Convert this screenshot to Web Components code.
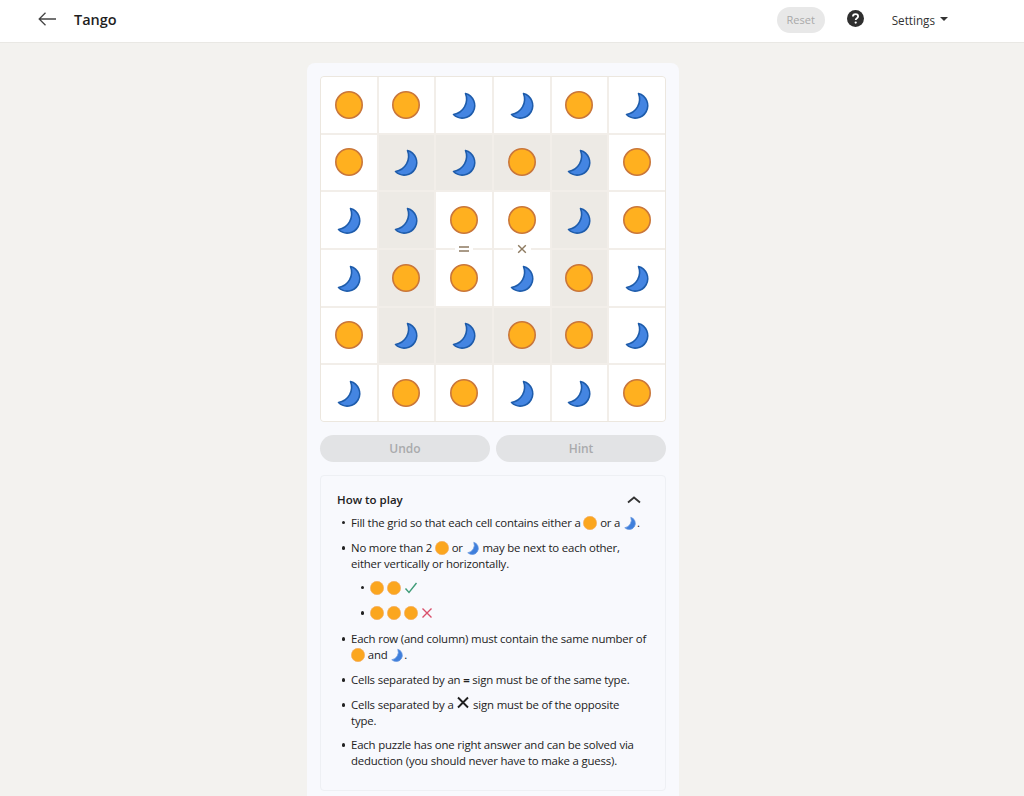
<!DOCTYPE html>
<html><head><meta charset="utf-8"><title>Tango</title>
<style>
html,body{margin:0;padding:0;background:#f3f2ef;font-family:"Open Sans","Noto Sans",sans-serif;color:#1f1f1f;}
body{height:796px;overflow:hidden;}
</style></head><body>
<tg-app></tg-app>
<script>
const SUN=(s,sw,fill,stroke)=>`<svg width="${s}" height="${s}" viewBox="0 0 28 28"><circle cx="14" cy="14" r="${14-sw/2}" fill="${fill}" stroke="${stroke}" stroke-width="${sw}"/></svg>`;
const MOON=(s,sw,fill,stroke)=>`<svg width="${s}" height="${s}" viewBox="0 0 28 28" style="overflow:visible"><path transform="translate(1 0)" d="M14.5 2.5A12.5 12.5 0 1 1 2.5 23.5A15.5 15.5 0 0 0 14.5 2.5Z" fill="${fill}" stroke="${stroke}" stroke-width="${sw}" stroke-linejoin="round"/></svg>`;
function def(name,css,render){
  customElements.define(name,class extends HTMLElement{
    constructor(){super();this.attachShadow({mode:'open'});}
    connectedCallback(){this.shadowRoot.innerHTML=`<style>${css}</style>`+render(this);}
  });
}
def('tg-icon',`:host{display:inline-flex;vertical-align:-3px;line-height:0}`,el=>{
  const t=el.getAttribute('type');
  if(t==='sun')return SUN(14,1.4,'#fba61f','#f4b06a');
  if(t==='moon')return MOON(14,1.4,'#3f7fdc','#6a9ae0');
  if(t==='check')return `<svg width="14" height="14" viewBox="0 0 14 14"><path d="M1.5 7.5 5 11.5 12.5 2" fill="none" stroke="#3f9c78" stroke-width="1.4"/></svg>`;
  if(t==='x')return `<svg width="14" height="14" viewBox="0 0 14 14"><path d="M2.5 2.5 11.5 11.5M11.5 2.5 2.5 11.5" fill="none" stroke="#d94f6b" stroke-width="1.4"/></svg>`;
  if(t==='bigx')return `<svg width="14" height="14" viewBox="0 0 14 14" style="position:relative;top:-2px"><path d="M2 1.5 12 11.5M12 1.5 2 11.5" fill="none" stroke="#1f1f1f" stroke-width="1.9"/></svg>`;
  return '';
});
def('tg-header',`
:host{display:flex;align-items:center;height:42px;background:#fff;border-bottom:1px solid #e9e8e4;padding:0 76px 0 38px;box-sizing:content-box}
.back{display:flex;width:18px;height:14px;margin-right:18px;margin-top:-5px}
.title{font-size:14.5px;font-weight:600;color:#1f1f1f;margin-top:-3px}
.sp{flex:1}
.reset{width:48px;height:26px;border-radius:13px;background:#e8e8e8;color:#a8a8a8;font-size:11px;font-weight:500;display:flex;align-items:center;justify-content:center;margin:-3px 22.5px 0 0}
.help{display:flex;margin:-5px 27.5px 0 0}
.settings{font-size:11.7px;font-weight:500;color:#333;display:flex;align-items:center;gap:5px;margin-top:-3px}
.caret{width:0;height:0;border-left:4px solid transparent;border-right:4px solid transparent;border-top:4px solid #333;margin-top:-2px}
`,()=>`
<span class="back"><svg width="18" height="14" viewBox="0 0 18 14"><path d="M18 7H1.2M7.5 .8 1.2 7l6.3 6.2" fill="none" stroke="#444" stroke-width="1.3"/></svg></span>
<span class="title">Tango</span><span class="sp"></span>
<span class="reset">Reset</span>
<span class="help"><svg width="17" height="17" viewBox="0 0 17 17"><circle cx="8.5" cy="8.5" r="8.5" fill="#2f2f2f"/><path d="M5.9 6.6C5.9 5 7 4.1 8.5 4.1S11.1 5 11.1 6.4C11.1 8.2 8.7 8.2 8.7 10" fill="none" stroke="#fff" stroke-width="1.8"/><circle cx="8.7" cy="12.6" r="1.15" fill="#fff"/></svg></span>
<span class="settings">Settings<span class="caret"></span></span>`);
def('tg-cell',`
:host{display:flex;align-items:center;justify-content:center;background:#fff;min-width:0;min-height:0}
:host([shade]){background:#edeae5}
svg{display:block}
`,el=>el.getAttribute('v')==='s'?SUN(28,1.6,'#ffb01f','#c9763a'):MOON(28,1.6,'#4485e2','#1e5cab'));
def('tg-sign',`
:host{position:absolute;width:18px;height:10px;background:#fff;display:flex;align-items:center;justify-content:center;transform:translate(-50%,-50%)}
svg{display:block}
`,el=>el.getAttribute('t')==='eq'
 ?`<svg width="10" height="8" viewBox="0 0 10 8"><path d="M0 2H10M0 6H10" stroke="#8d7a60" stroke-width="1.4"/></svg>`
 :`<svg width="10" height="10" viewBox="0 0 10 10"><path d="M1.2 1.2 8.8 8.8M8.8 1.2 1.2 8.8" stroke="#8d7a60" stroke-width="1.4"/></svg>`);
def('tg-board',`
:host{display:block;position:relative;width:346px;height:346px;box-sizing:border-box;border:1px solid #ece7df;border-radius:4px;background:#f2eee9;overflow:hidden}
.g{display:grid;grid-template-columns:repeat(6,1fr);grid-template-rows:repeat(6,1fr);gap:2px;width:100%;height:100%}
tg-sign.a{left:143px;top:172px}
tg-sign.b{left:200.5px;top:172px}
`,()=>{
 const rows=['ssmmsm','smmsms','mmssms','mssmsm','smmssm','mssmms'];
 let h='';
 rows.forEach((r,i)=>[...r].forEach((v,j)=>{
   const ring=(i>=1&&i<=4&&j>=1&&j<=4)&&(i===1||i===4||j===1||j===4);
   h+=`<tg-cell v="${v}"${ring?' shade':''}></tg-cell>`;
 }));
 return `<div class="g">${h}</div><tg-sign class="a" t="eq"></tg-sign><tg-sign class="b" t="x"></tg-sign>`;
});
def('tg-button',`
:host{flex:1;display:flex;height:27px;align-items:center;justify-content:center;background:#e2e3e5;border-radius:14px;color:#a9aaac;font-size:12px;font-weight:600}
`,()=>`<slot></slot>`);
def('tg-howto',`
:host{display:block;border:1px solid #eef0f4;border-radius:4px;background:#f8f9fd;padding:16px 17px 15px 16px;height:316px;box-sizing:border-box;font-size:11.4px;letter-spacing:-.18px;line-height:15.5px;color:#222}
.h{display:flex;justify-content:space-between;align-items:center;font-weight:600;font-size:11.5px;letter-spacing:0;margin-bottom:7px}
.h svg{display:block;margin-right:7px}
ul{margin:0;padding:0 0 0 14px;list-style:none}
li{margin:0 0 9.8px;position:relative}
.top>li:nth-child(1){margin-bottom:10.4px}
.top>li:nth-child(2){margin-bottom:10.4px}
.top>li:nth-child(3){margin-bottom:9.2px}
.top>li:nth-child(5){margin-bottom:9px}
li.t{line-height:16px}
li::before{content:"";position:absolute;left:-9.5px;top:6px;width:3.8px;height:3.8px;border-radius:50%;background:#222}
ul ul{padding-left:19px;margin-top:8.2px}
ul ul li:last-child{margin-bottom:0}
`,()=>`
<div class="h"><span>How to play</span><svg width="14" height="8" viewBox="0 0 14 8"><path d="M1 6.5 7 1.5l6 5" fill="none" stroke="#333" stroke-width="1.8"/></svg></div>
<ul class="top">
<li>Fill the grid so that each cell contains either a <tg-icon type="sun"></tg-icon> or a <tg-icon type="moon"></tg-icon>.</li>
<li>No more than 2 <tg-icon type="sun"></tg-icon> or <tg-icon type="moon"></tg-icon> may be next to each other, either vertically or horizontally.
<ul><li><tg-icon type="sun"></tg-icon> <tg-icon type="sun"></tg-icon> <tg-icon type="check"></tg-icon></li>
<li><tg-icon type="sun"></tg-icon> <tg-icon type="sun"></tg-icon> <tg-icon type="sun"></tg-icon> <tg-icon type="x"></tg-icon></li></ul></li>
<li class="t">Each row (and column) must contain the same number of <tg-icon type="sun"></tg-icon> and <tg-icon type="moon"></tg-icon>.</li>
<li>Cells separated by an <b>=</b> sign must be of the same type.</li>
<li>Cells separated by a <tg-icon type="bigx"></tg-icon> sign must be of the opposite<br>type.</li>
<li>Each puzzle has one right answer and can be solved via deduction (you should never have to make a guess).</li>
</ul>`);
def('tg-app',`
:host{display:block}
main{width:372px;margin:20px 0 0 307px;background:#f8f9fd;border-radius:8px 8px 0 0;padding:13px 13px 40px;box-sizing:border-box}
.btns{display:flex;gap:6px;margin:13px 0}
`,()=>`<tg-header></tg-header><main><tg-board></tg-board><div class="btns"><tg-button>Undo</tg-button><tg-button>Hint</tg-button></div><tg-howto></tg-howto></main>`);
</script>
</body></html>
